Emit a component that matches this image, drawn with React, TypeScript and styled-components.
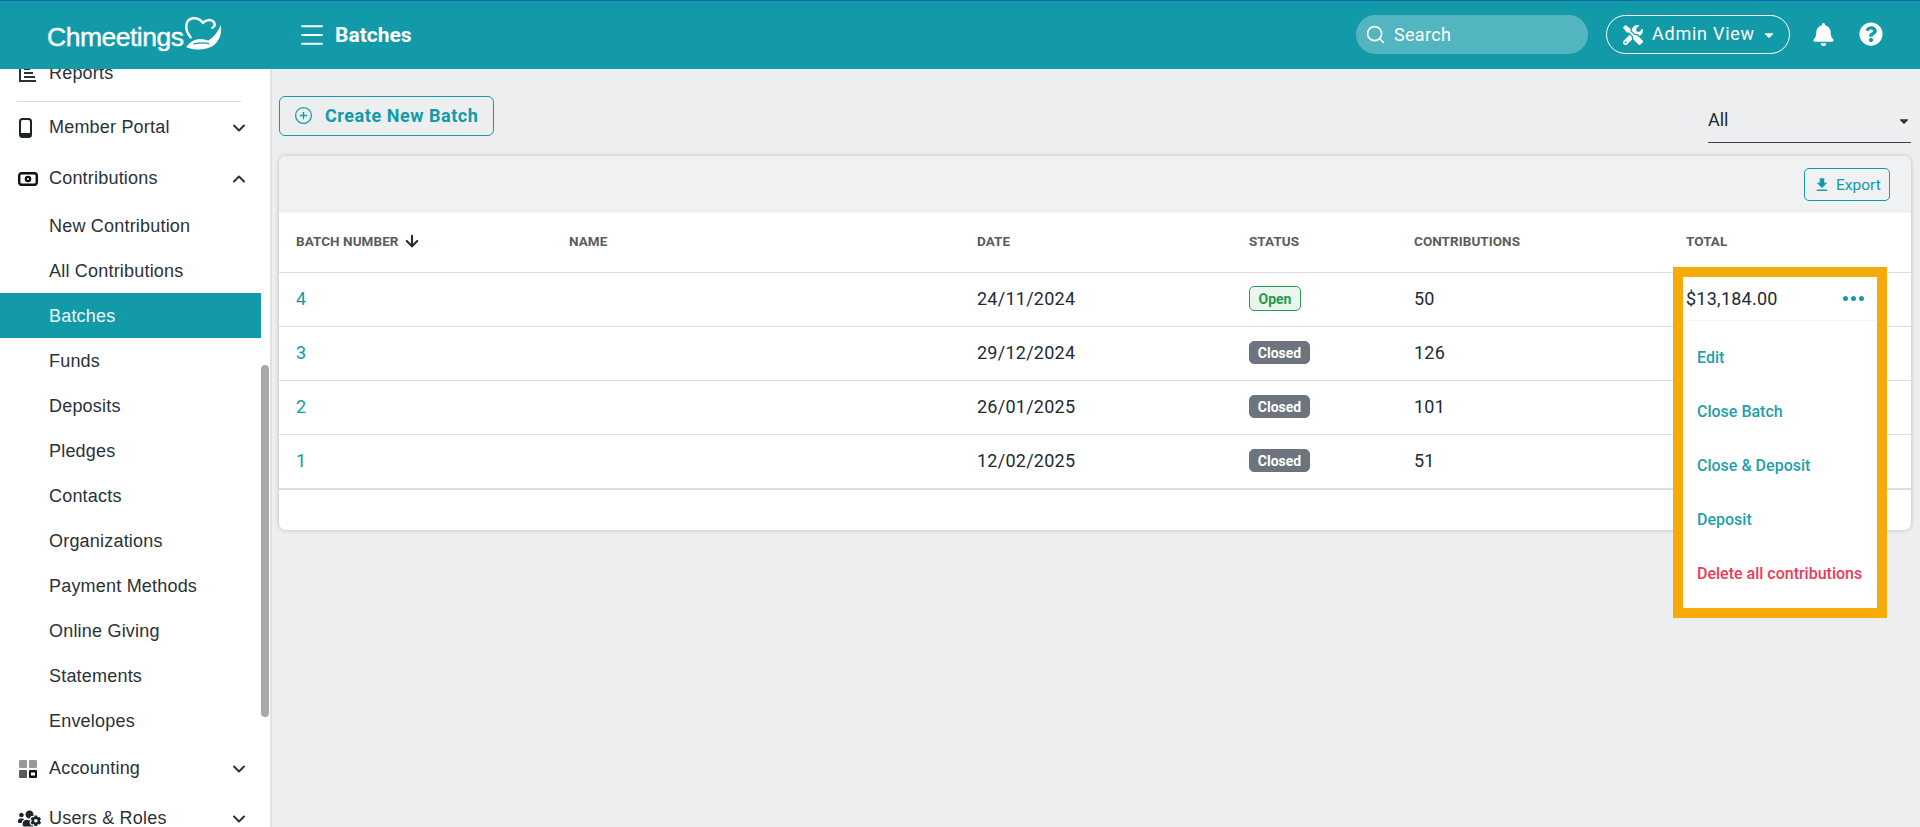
import React from "react";
import styled, { createGlobalStyle } from "styled-components";
import { Search, CirclePlus, ArrowDown, ChevronDown, ChevronUp, Menu as MenuIcon } from "lucide-react";
import { FaTools, FaBell, FaQuestionCircle, FaUsersCog, FaCaretDown } from "react-icons/fa";
import { MdFileDownload } from "react-icons/md";

const teal = "#139aa9";
const ink = "#212b36";

const Global = createGlobalStyle`
  html, body { margin: 0; padding: 0; height: 100%; overflow: hidden; background: #eceef0; }
  * { box-sizing: border-box; }
  #root { height: 100%; }
`;

const Page = styled.div`
  display: flex;
  flex-direction: column;
  width: 1920px;
  height: 827px;
  overflow: hidden;
  font-family: Roboto, "Liberation Sans", sans-serif;
  color: ${ink};
`;

const TopBar = styled.header`
  position: relative;
  z-index: 2;
  flex: 0 0 69px;
  display: flex;
  align-items: center;
  background: ${teal};
  border-top: 1px solid #0f69a3;
  color: #fff;
`;

const Brand = styled.div`
  width: 297px;
  padding-left: 47px;
  display: flex;
  align-items: center;
  gap: 1px;
`;

const BrandName = styled.span`
  font-family: "Liberation Sans", Arial, sans-serif;
  font-size: 26.500px;
  letter-spacing: -0.5px;
  line-height: 30px;
  margin-top: 3px;
  -webkit-text-stroke: 0.4px #fff;
`;

const PageTitle = styled.h1`
  margin: 0 auto 0 8px;
  font-size: 21px;
  font-weight: 700;
  line-height: 24px;
`;

const SearchBox = styled.div`
  width: 232px;
  height: 39px;
  margin: -1px 18px 0 0;
  padding-left: 9px;
  display: flex;
  align-items: center;
  gap: 8px;
  border-radius: 20px;
  background: rgba(255, 255, 255, 0.27);
  font-size: 18px;
  letter-spacing: 0.3px;
`;

const ViewButton = styled.div`
  width: 184px;
  height: 39px;
  margin: -1px 22px 0 0;
  padding-left: 16px;
  display: flex;
  align-items: center;
  border: 1px solid #fff;
  border-radius: 20px;
  font-size: 18px;
  font-weight: 400;
  letter-spacing: 0.75px;
`;

const ViewLabel = styled.span`
  margin: -2px 7px 0 9px;
`;

const HeadIcons = styled.div`
  display: flex;
  align-items: center;
  gap: 24px;
  margin: -2px 37px 0 0;
`;

const Body = styled.div`
  flex: 1;
  min-height: 0;
  display: flex;
`;

const Side = styled.aside`
  position: relative;
  flex: 0 0 272px;
  overflow: hidden;
  background: #fff;
  border-right: 2px solid #e0e2e4;
  font-family: "Liberation Sans", Arial, sans-serif;
`;

const SideList = styled.nav`
  margin-top: -21px;
  padding-right: 9px;
`;

const SectionRow = styled.div<{ $h?: number; $nudge?: number }>`
  height: ${(p) => p.$h ?? 51}px;
  display: flex;
  align-items: center;
  padding: ${(p) => Math.max(p.$nudge ?? 0, 0)}px 12px ${(p) => Math.max(-(p.$nudge ?? 0), 0)}px 18px;
  font-size: 18px;
  letter-spacing: 0.2px;
  color: #2a3238;
`;

const SectionIcon = styled.span`
  flex: 0 0 31px;
  display: flex;
  align-items: center;
`;

const SectionLabel = styled.span`
  flex: 1;
`;

const SideRule = styled.hr`
  margin: 3px 20px -1px 17px;
  border: 0;
  height: 1px;
  background: #d9dbdd;
`;

const SubItem = styled.div<{ $active?: boolean }>`
  height: 45px;
  display: flex;
  align-items: center;
  padding: 2px 0 0 49px;
  font-size: 18px;
  letter-spacing: 0.2px;
  background: ${(p) => (p.$active ? teal : "transparent")};
  color: ${(p) => (p.$active ? "#e9f7f8" : "#2a3238")};
`;

const Thumb = styled.div`
  position: absolute;
  left: 261px;
  top: 296px;
  width: 8px;
  height: 352px;
  border-radius: 4px;
  background: #a9a9a9;
`;

const Main = styled.main`
  flex: 1;
  min-width: 0;
  padding: 27px 9px 0 7px;
`;

const ToolRow = styled.div`
  display: flex;
  justify-content: space-between;
  align-items: flex-start;
  height: 47px;
`;

const CreateButton = styled.div`
  width: 215px;
  height: 40px;
  padding: 0 0 2px 14px;
  display: flex;
  align-items: center;
  gap: 12px;
  border: 1px solid ${teal};
  border-radius: 6px;
  color: ${teal};
  font-size: 18px;
  font-weight: 700;
  letter-spacing: 0.55px;
`;

const SelectBox = styled.div`
  width: 203px;
  height: 47px;
  padding: 12px 0 0;
  display: flex;
  justify-content: space-between;
  border-bottom: 1px solid #3c4248;
  font-size: 18px;
  line-height: 24px;
  color: #22282e;
`;

const SelectCaret = styled.span`
  display: flex;
  padding-top: 6px;
`;

const Card = styled.section`
  position: relative;
  height: 374px;
  margin-top: 13px;
  border-radius: 7px;
  overflow: visible;
  background: #fff;
  box-shadow: 0 0 4px rgba(0, 0, 0, 0.22);
`;

const CardHead = styled.div`
  height: 57px;
  padding: 12px 21px 0 0;
  display: flex;
  justify-content: flex-end;
  background: #f0f1f2;
  border-radius: 7px 7px 0 0;
`;

const ExportButton = styled.div`
  width: 86px;
  height: 33px;
  padding-left: 8px;
  display: flex;
  align-items: center;
  gap: 5px;
  border: 1px solid ${teal};
  border-radius: 5px;
  color: ${teal};
  font-size: 15.500px;
`;

const Row = styled.div<{ $head?: boolean }>`
  display: grid;
  grid-template-columns: 273px 408px 272px 165px 272px 1fr;
  align-items: center;
  height: ${(p) => (p.$head ? 60 : 54)}px;
  padding-left: 17px;
  padding-bottom: ${(p) => (p.$head ? 3 : 2)}px;
  border-bottom: 1px solid #dcdee0;
  font-size: ${(p) => (p.$head ? 13.5 : 18)}px;
  font-weight: ${(p) => (p.$head ? 700 : 400)};
  letter-spacing: ${(p) => (p.$head ? 0.05 : 0.25)}px;
  color: ${(p) => (p.$head ? "#5c5c5c" : ink)};
`;

const SortHead = styled.span`
  display: flex;
  align-items: center;
  gap: 5px;
`;

const BatchLink = styled.span`
  color: ${teal};
`;

const Badge = styled.span<{ $open?: boolean }>`
  justify-self: start;
  display: flex;
  align-items: center;
  justify-content: center;
  height: ${(p) => (p.$open ? 25 : 23)}px;
  width: ${(p) => (p.$open ? 52 : 61)}px;
  border-radius: 5px;
  border: 1px solid ${(p) => (p.$open ? "#2a9d55" : "#6c757d")};
  background: ${(p) => (p.$open ? "#e9f6ee" : "#6c757d")};
  color: ${(p) => (p.$open ? "#23994f" : "#fff")};
  font-size: 14px;
  font-weight: 700;
  letter-spacing: 0;
`;

const Foot = styled.div`
  height: 42px;
  margin-top: -1px;
  border-top: 2px solid #dcdee0;
`;

const Callout = styled.div`
  position: absolute;
  top: 111px;
  right: 24px;
  width: 214px;
  height: 351px;
  border: 10px solid #f7ab0a;
  background: #fff;
`;

const CalloutTop = styled.div`
  height: 44px;
  margin-left: 3px;
  padding: 0 13px 0 0;
  display: flex;
  align-items: center;
  justify-content: space-between;
  border-bottom: 1px solid #f2f3f4;
  font-size: 18px;
  letter-spacing: 0.25px;
`;

const Dots = styled.span`
  display: flex;
  gap: 3px;
`;

const Dot = styled.i`
  width: 5px;
  height: 5px;
  border-radius: 50%;
  background: ${teal};
`;

const MenuList = styled.div`
  padding-top: 9px;
`;

const MenuItem = styled.div<{ $danger?: boolean }>`
  height: 54px;
  display: flex;
  align-items: center;
  padding-left: 14px;
  font-size: 16px;
  font-weight: 500;
  color: ${(p) => (p.$danger ? "#ee3a57" : "#1f9fac")};
`;

const Logo = () => (
  <svg width="40" height="40" viewBox="8 8 36 36" fill="none">
    <path
      d="M14 28C8 21 9 12 16 11c4-.5 7 1.500 9 4 3-3 8-3.500 10-.5 1 2 .5 4-1.500 5"
      stroke="#fff"
      strokeWidth="2.200"
      strokeLinecap="round"
    />
    <path
      d="M10 37c5-7 11-8 16-7l4 1c3-2 8-6 11-14 2 9-3 19-12 21-7 2-13 1-19-1z"
      fill="#fff"
    />
    <path d="M17 34c5-1 10-1 13-.500" stroke={teal} strokeWidth="1.200" strokeLinecap="round" />
  </svg>
);

const ReportsIcon = () => (
  <svg width="20" height="20" viewBox="0 0 20 20" fill="none" stroke="#2a3238" strokeWidth="2">
    <path d="M2 1v17h16" />
    <path d="M6 6h6M6 10h9M6 14h11" />
  </svg>
);

const PhoneIcon = () => (
  <svg width="16" height="20" viewBox="0 0 16 20" fill="none">
    <rect x="2" y="1" width="11" height="18" rx="2.500" stroke="#1d2429" strokeWidth="2" />
    <path d="M2 15h11v2a2 2 0 0 1-2 2H4a2 2 0 0 1-2-2z" fill="#1d2429" />
  </svg>
);

const CashIcon = () => (
  <svg width="20" height="16" viewBox="0 0 20 16" fill="none" stroke="#111">
    <rect x="1.200" y="2.200" width="17.600" height="11.600" rx="2.500" strokeWidth="2.400" />
    <circle cx="10" cy="8" r="2.200" strokeWidth="2.200" />
  </svg>
);

const GridIcon = () => (
  <svg width="20" height="20" viewBox="0 0 20 20">
    <rect x="1" y="1" width="8" height="8" rx="1" fill="#9a9a9a" />
    <rect x="11" y="1" width="8" height="8" rx="1" fill="#9a9a9a" />
    <rect x="1" y="11" width="8" height="8" rx="1" fill="#5a5a5a" />
    <rect x="11" y="11" width="8" height="8" rx="1" fill="#111" />
    <rect x="13" y="13.500" width="4" height="3" fill="#fff" />
  </svg>
);

const batches = [
  { id: 4, date: "24/11/2024", open: true, count: 50 },
  { id: 3, date: "29/12/2024", open: false, count: 126 },
  { id: 2, date: "26/01/2025", open: false, count: 101 },
  { id: 1, date: "12/02/2025", open: false, count: 51 },
];

const subItems = [
  "New Contribution",
  "All Contributions",
  "Batches",
  "Funds",
  "Deposits",
  "Pledges",
  "Contacts",
  "Organizations",
  "Payment Methods",
  "Online Giving",
  "Statements",
  "Envelopes",
];

const menuItems = ["Edit", "Close Batch", "Close & Deposit", "Deposit"];

const chevron = <ChevronDown size={20} strokeWidth={2.4} color="#2a3238" />;

export default function App() {
  return (
    <Page>
      <Global />
      <TopBar>
        <Brand>
          <BrandName>Chmeetings</BrandName>
          <Logo />
        </Brand>
        <MenuIcon size={30} strokeWidth={1.5} />
        <PageTitle>Batches</PageTitle>
        <SearchBox>
          <Search size={21} strokeWidth={1.8} />
          <span>Search</span>
        </SearchBox>
        <ViewButton>
          <FaTools size={20} />
          <ViewLabel>Admin View</ViewLabel>
          <FaCaretDown size={14} />
        </ViewButton>
        <HeadIcons>
          <FaBell size={23} />
          <FaQuestionCircle size={24} />
        </HeadIcons>
      </TopBar>
      <Body>
        <Side>
          <SideList>
            <SectionRow $h={50}>
              <SectionIcon><ReportsIcon /></SectionIcon>
              <SectionLabel>Reports</SectionLabel>
            </SectionRow>
            <SideRule />
            <SectionRow $nudge={2}>
              <SectionIcon><PhoneIcon /></SectionIcon>
              <SectionLabel>Member Portal</SectionLabel>
              {chevron}
            </SectionRow>
            <SectionRow $nudge={2}>
              <SectionIcon><CashIcon /></SectionIcon>
              <SectionLabel>Contributions</SectionLabel>
              <ChevronUp size={20} strokeWidth={2.4} color="#2a3238" />
            </SectionRow>
            {subItems.map((label) => (
              <SubItem key={label} $active={label === "Batches"}>{label}</SubItem>
            ))}
            <SectionRow>
              <SectionIcon><GridIcon /></SectionIcon>
              <SectionLabel>Accounting</SectionLabel>
              {chevron}
            </SectionRow>
            <SectionRow $nudge={-2}>
              <SectionIcon><FaUsersCog size={23} color="#1d2429" /></SectionIcon>
              <SectionLabel>Users &amp; Roles</SectionLabel>
              {chevron}
            </SectionRow>
          </SideList>
          <Thumb />
        </Side>
        <Main>
          <ToolRow>
            <CreateButton>
              <CirclePlus size={19} strokeWidth={1.6} />
              <span>Create New Batch</span>
            </CreateButton>
            <SelectBox>
              <span>All</span>
              <SelectCaret><FaCaretDown size={14} color="#333" /></SelectCaret>
            </SelectBox>
          </ToolRow>
          <Card>
            <CardHead>
              <ExportButton>
                <MdFileDownload size={18} />
                <span>Export</span>
              </ExportButton>
            </CardHead>
            <Row $head>
              <SortHead>BATCH NUMBER <ArrowDown size={18} strokeWidth={2.8} color="#212b36" /></SortHead>
              <span>NAME</span>
              <span>DATE</span>
              <span>STATUS</span>
              <span>CONTRIBUTIONS</span>
              <span>TOTAL</span>
            </Row>
            {batches.map((b) => (
              <Row key={b.id}>
                <BatchLink>{b.id}</BatchLink>
                <span />
                <span>{b.date}</span>
                <Badge $open={b.open}>{b.open ? "Open" : "Closed"}</Badge>
                <span>{b.count}</span>
                <span />
              </Row>
            ))}
            <Foot />
            <Callout>
              <CalloutTop>
                <span>$13,184.00</span>
                <Dots><Dot /><Dot /><Dot /></Dots>
              </CalloutTop>
              <MenuList>
                {menuItems.map((m) => (
                  <MenuItem key={m}>{m}</MenuItem>
                ))}
                <MenuItem $danger>Delete all contributions</MenuItem>
              </MenuList>
            </Callout>
          </Card>
        </Main>
      </Body>
    </Page>
  );
}
